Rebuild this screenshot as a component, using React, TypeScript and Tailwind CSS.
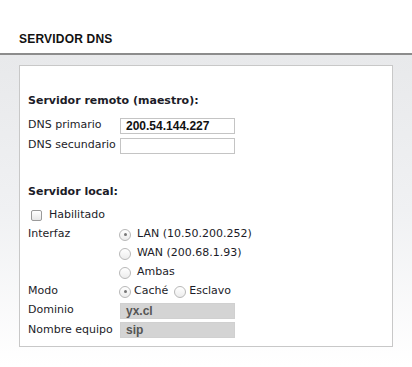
import React from 'react';

const font = { fontFamily: '"DejaVu Sans", Verdana, sans-serif' };
const inputFont = { fontFamily: '"Liberation Sans", Arial, sans-serif' };

function Radio({ checked }: { checked?: boolean }) {
  return (
    <span className="inline-flex h-[12px] w-[12px] shrink-0 items-center justify-center rounded-full border border-[#b8b8b8] bg-gradient-to-b from-white to-[#ececec]">
      {checked && <span className="h-[3px] w-[3px] rounded-full bg-[#777]" />}
    </span>
  );
}

function Row({ label, h = 'h-[19px]', children }: { label: string; h?: string; children: React.ReactNode }) {
  return (
    <div className={`flex items-center whitespace-nowrap ${h}`}>
      <span className="w-[92px] shrink-0">{label}</span>
      {children}
    </div>
  );
}

function TextInput({ value, disabled }: { value?: string; disabled?: boolean }) {
  return (
    <div
      style={inputFont}
      className={`flex h-[16px] w-[115px] items-center border px-[5px] text-[12px] font-bold ${
        disabled ? 'border-[#d0d0d0] bg-[#d4d4d4] text-[#555]' : 'border-[#c4c4c4] bg-white text-[#111]'
      }`}
    >
      {value}
    </div>
  );
}

export default function App() {
  return (
    <div className="h-[367px] w-[412px] bg-white text-[11px] text-[#1c1c28]" style={font}>
      <div className="h-[55px] border-b-2 border-[#8c8c8c] px-[19px] pt-[30px]">
        <h1 className="text-[12px] font-bold tracking-[0.2px] text-[#111]" style={inputFont}>
          SERVIDOR DNS
        </h1>
      </div>
      <div className="h-[310px] bg-gradient-to-b from-[#e8e9eb] via-[#f0f1f3] to-white px-[19px] pt-[10px]">
        <div className="h-[282px] border border-[#c8c8c8] bg-white px-[8px] pt-[27px]">
          <p className="mb-[6px] font-bold">Servidor remoto (maestro):</p>
          <Row label="DNS primario" h="h-[20px]">
            <TextInput value="200.54.144.227" />
          </Row>
          <Row label="DNS secundario" h="h-[20px]">
            <TextInput />
          </Row>
          <p className="mb-[6px] mt-[28px] font-bold">Servidor local:</p>
          <div className="flex h-[19px] items-center gap-[7px] pl-[3px]">
            <span className="h-[11px] w-[11px] rounded-[2px] border border-[#9a9a9a] bg-gradient-to-b from-white to-[#e8e8e8]" />
            <span>Habilitado</span>
          </div>
          <Row label="Interfaz">
            <span className="-ml-[1px] flex items-center gap-[6px]">
              <Radio checked />
              LAN (10.50.200.252)
            </span>
          </Row>
          <Row label="">
            <span className="-ml-[1px] flex items-center gap-[6px]">
              <Radio />
              WAN (200.68.1.93)
            </span>
          </Row>
          <Row label="">
            <span className="-ml-[1px] flex items-center gap-[6px]">
              <Radio />
              Ambas
            </span>
          </Row>
          <Row label="Modo">
            <span className="-ml-[1px] flex items-center gap-[3px]">
              <Radio checked />
              Caché
            </span>
            <span className="ml-[6px] flex items-center gap-[3px]">
              <Radio />
              Esclavo
            </span>
          </Row>
          <Row label="Dominio">
            <TextInput value="yx.cl" disabled />
          </Row>
          <Row label="Nombre equipo" h="h-[20px]">
            <TextInput value="sip" disabled />
          </Row>
        </div>
      </div>
    </div>
  );
}
